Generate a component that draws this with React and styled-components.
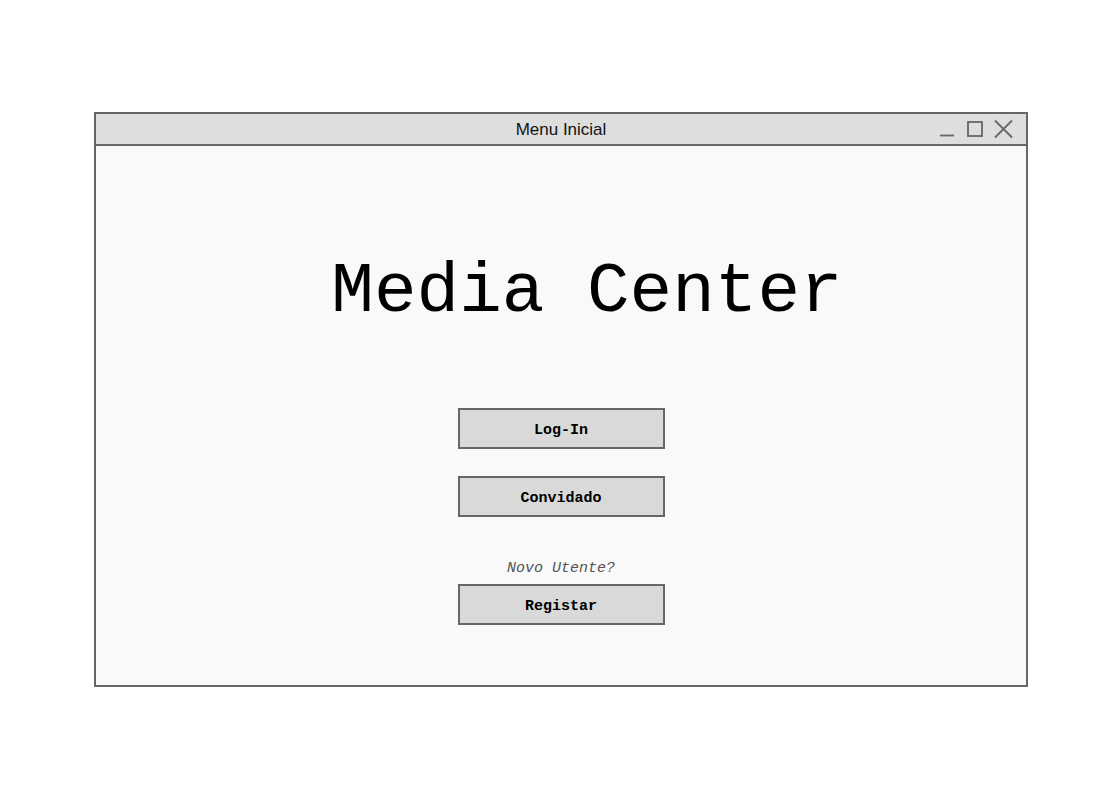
import React from "react";
import styled, { createGlobalStyle } from "styled-components";

const GlobalStyle = createGlobalStyle`
  * {
    box-sizing: border-box;
  }
  body {
    margin: 0;
    background: #ffffff;
    font-family: "Liberation Sans", Arial, sans-serif;
  }
`;

const Page = styled.div`
  width: 1100px;
  height: 800px;
  padding: 112px 0 0 94px;
`;

const Window = styled.section`
  width: 934px;
  height: 575px;
  border: 2px solid #666666;
  display: flex;
  flex-direction: column;
  background: #f9f9f9;
`;

const TitleBar = styled.header`
  height: 32px;
  flex: none;
  background: #dedede;
  border-bottom: 2px solid #666666;
  display: grid;
  grid-template-columns: 1fr auto 1fr;
  align-items: center;
`;

const Title = styled.span`
  grid-column: 2;
  padding-top: 2px;
  font-family: "Liberation Sans", Arial, sans-serif;
  font-size: 17px;
  color: #111111;
  line-height: 28px;
`;

const Controls = styled.div`
  grid-column: 3;
  justify-self: end;
  display: flex;
  padding-right: 10px;
`;

const Body = styled.main`
  flex: 1;
  display: flex;
  flex-direction: column;
  align-items: center;
  padding-top: 110px;
  font-family: "Liberation Mono", "Courier New", monospace;
`;

const Heading = styled.h1`
  margin: 0 0 80px;
  padding-left: 52px;
  font-family: "Liberation Mono", "Courier New", monospace;
  font-weight: 400;
  font-size: 71px;
  line-height: 72px;
  color: #000000;
  white-space: pre;
`;

const Button = styled.button`
  width: 207px;
  height: 41px;
  margin-bottom: ${(p) => p.$gap || 0}px;
  background: #d9d9d9;
  border: 2px solid #666666;
  border-radius: 0;
  font-family: "Liberation Mono", "Courier New", monospace;
  font-weight: 700;
  font-size: 15px;
  color: #000000;
  padding: 3px 0 0;
  cursor: pointer;
`;

const Caption = styled.p`
  margin: 0 0 7px;
  padding-top: 1px;
  font-family: "Liberation Mono", "Courier New", monospace;
  font-style: italic;
  font-size: 15px;
  line-height: 17px;
  color: #555555;
`;

const WindowControls = () => (
  <svg width="78" height="30" viewBox="0 0 78 30" fill="none" stroke="#666666" strokeWidth="1.8">
    <line x1="2" y1="21.5" x2="16" y2="21.5" />
    <rect x="30" y="8" width="14" height="14" />
    <line x1="57" y1="6.5" x2="74" y2="23.5" />
    <line x1="74" y1="6.5" x2="57" y2="23.5" />
  </svg>
);

export default function App() {
  return (
    <>
      <GlobalStyle />
      <Page>
        <Window>
          <TitleBar>
            <Title>Menu Inicial</Title>
            <Controls>
              <WindowControls />
            </Controls>
          </TitleBar>
          <Body>
            <Heading>Media Center</Heading>
            <Button $gap={27}>Log-In</Button>
            <Button $gap={42}>Convidado</Button>
            <Caption>Novo Utente?</Caption>
            <Button>Registar</Button>
          </Body>
        </Window>
      </Page>
    </>
  );
}
